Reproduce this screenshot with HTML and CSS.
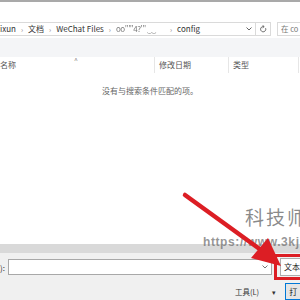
FILE: index.html
```html
<!DOCTYPE html>
<html lang="zh">
<head>
<meta charset="utf-8">
<link rel="stylesheet" href="styles.css">
</head>
<body>
<div class="win">
  <div class="topline"></div>
  <div class="addrrow">
    <div class="addr">
      <div class="crumbs">
        <span>ixun</span><span class="sep">›</span>
        <span>文档</span><span class="sep">›</span>
        <span>WeChat Files</span><span class="sep">›</span>
        <span class="blur">oo'''''4?''' ‿‿</span><span class="sep">›</span>
        <span>config</span>
      </div>
      <svg class="dd" width="6" height="4" viewBox="0 0 6 4"><path d="M0.5 0.5 L3 3 L5.5 0.5" fill="none" stroke="#555" stroke-width="0.9"/></svg>
    </div>
    <div class="refresh">
      <svg width="7" height="8" viewBox="0 0 7 8"><path d="M5.6 3.2 A2.6 2.6 0 1 1 3.5 1.6" fill="none" stroke="#555" stroke-width="0.9"/><path d="M2.6 0.4 L4.2 1.6 L2.6 2.8" fill="none" stroke="#555" stroke-width="0.9"/></svg>
    </div>
    <div class="search">在 co</div>
  </div>
  <div class="toolbar"></div>
  <div class="headers">
    <div class="col cname">名称<span class="sort">^</span></div>
    <div class="col cdate">修改日期</div>
    <div class="col ctype">类型</div>
  </div>
  <div class="empty">没有与搜索条件匹配的项。</div>
  <div class="fill"></div>
  <div class="band"></div>
  <div class="panel">
    <div class="fnrow">
      <span class="lbl">):</span>
      <div class="input">
        <svg class="dd" width="6" height="4" viewBox="0 0 6 4"><path d="M0.5 0.5 L3 3 L5.5 0.5" fill="none" stroke="#666" stroke-width="0.9"/></svg>
      </div>
      <div class="hl">
        <div class="btn">文本</div>
      </div>
    </div>
    <div class="btnrow">
      <span class="tools">工具(L)</span>
      <span class="tri">▾</span>
      <div class="btn open">打</div>
    </div>
  </div>
  <div class="wm">
    <div class="wm1">科技师</div>
    <div class="wm2">https://www.3kj</div>
  </div>
  <svg class="arrow" width="300" height="300" viewBox="0 0 300 300">
    <line x1="185" y1="195" x2="261" y2="250" stroke="#dc1e24" stroke-width="4.5" stroke-linecap="round"/>
    <polygon points="251,258 268,238 281,266" fill="#dc1e24"/>
  </svg>
</div>
</body>
</html>
```
FILE: styles.css
```css
* { box-sizing: border-box; }
body {
  margin: 0;
  width: 300px;
  height: 300px;
  overflow: hidden;
  background: #fff;
  font-family: "Noto Sans CJK SC", "Noto Sans", sans-serif;
  font-size: 8px;
  color: #333;
}
.win {
  position: relative;
  width: 300px;
  height: 300px;
  display: flex;
  flex-direction: column;
  overflow: hidden;
}
.topline { height: 2px; background: #a9a9a9; flex: none; }
.addrrow {
  margin-top: 20px;
  height: 14px;
  display: flex;
  flex: none;
}
.addr {
  width: 258px;
  margin-left: -2px;
  border: 1px solid #dadada;
  display: flex;
  align-items: center;
  justify-content: space-between;
  padding-right: 3px;
}
.crumbs {
  display: flex;
  align-items: center;
  gap: 5px;
  white-space: nowrap;
  line-height: 12px;
  margin-left: 1px;
}
.sep { color: #888; font-size: 7px; }
.blur { color: #777; filter: blur(0.4px); width: 49px; overflow: hidden; letter-spacing: -0.5px; }
.refresh {
  width: 15px;
  border: 1px solid #dadada;
  border-left: none;
  display: flex;
  align-items: center;
  justify-content: center;
}
.search {
  margin-left: 6px;
  flex: 1;
  border: 1px solid #dadada;
  border-right: none;
  color: #777;
  padding-left: 3px;
  line-height: 12px;
  white-space: nowrap;
  overflow: hidden;
  font-size: 7.5px;
}
.toolbar { margin-top: 2px; height: 19px; background: #f4f5f7; flex: none; }
.headers { height: 16px; display: flex; flex: none; }
.col {
  border-right: 1px solid #e6e6e6;
  line-height: 16px;
  color: #555;
  padding-left: 4px;
  position: relative;
}
.cname { width: 155px; padding-left: 0; }
.cdate { width: 74px; }
.ctype { width: 70px; }
.sort {
  position: absolute;
  left: 74px;
  top: -5px;
  font-size: 7px;
  color: #888;
}
.empty {
  margin-top: 13px;
  text-align: center;
  color: #666;
  line-height: 10px;
  flex: none;
}
.fill { flex: 1; }
.band { height: 9px; background: #d9d9d9; flex: none; }
.panel {
  height: 47px;
  background: #f0f0f0;
  flex: none;
  display: flex;
  flex-direction: column;
}
.fnrow {
  margin-top: 1px;
  height: 26px;
  display: flex;
  align-items: center;
}
.lbl { width: 8px; color: #333; white-space: nowrap; }
.input {
  width: 268px;
  height: 16px;
  background: #fff;
  border: 1px solid #a8a8a8;
  display: flex;
  align-items: center;
  justify-content: flex-end;
  padding-right: 3px;
}
.hl {
  margin-left: 2px;
  flex: 1;
  height: 26px;
  border: 3px solid #dc1e24;
  border-right: none;
  padding: 1px 0 1px 3px;
  display: flex;
}
.btn {
  flex: 1;
  background: #fdfdfd;
  border: 1px solid #adadad;
  border-right: none;
  color: #222;
  line-height: 16px;
  padding-left: 3px;
  white-space: nowrap;
}
.btnrow {
  margin-top: 3px;
  display: flex;
  align-items: center;
  height: 17px;
}
.tools { margin-left: 235px; color: #333; font-size: 7.5px; }
.tri { margin-left: 13px; font-size: 7px; color: #333; }
.open {
  margin-left: 9px;
  height: 17px;
  background: #e5e5e5;
  border: 1px solid #0078d7;
  border-right: none;
}
.wm {
  position: absolute;
  left: 203px;
  top: 205px;
  width: 110px;
}
.wm1 {
  margin-left: 42px;
  font-size: 19px;
  letter-spacing: 2px;
  color: rgba(100, 100, 100, 0.75);
  line-height: 24px;
  white-space: nowrap;
}
.wm2 {
  margin-top: 6px;
  font-family: "Liberation Sans", Arial, sans-serif;
  font-size: 12px;
  font-weight: bold;
  letter-spacing: 0.6px;
  color: rgba(115, 115, 115, 0.75);
  line-height: 14px;
  white-space: nowrap;
}
.arrow { position: absolute; left: 0; top: 0; pointer-events: none; }
```
